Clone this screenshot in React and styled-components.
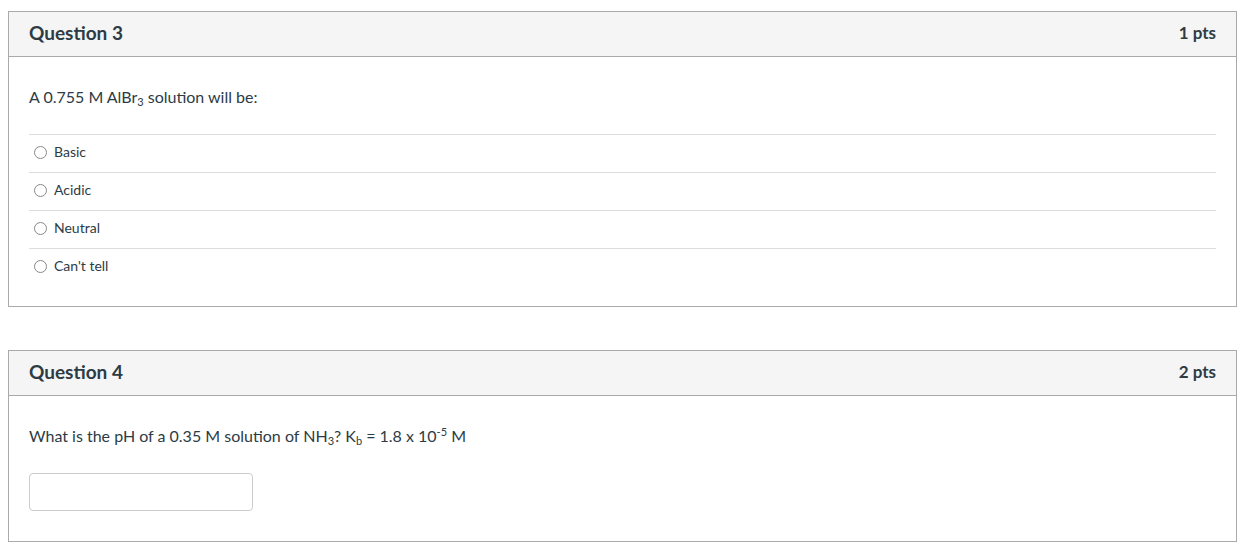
import styled, { createGlobalStyle } from "styled-components";

const GlobalStyle = createGlobalStyle`
  body {
    margin: 0;
    background: #fff;
    font-family: Lato, "Open Sans", sans-serif;
    color: #2d3b45;
  }
`;

const Page = styled.main`
  width: 1229px;
  padding: 11px 0 0 8px;
  display: flex;
  flex-direction: column;
  gap: 43px;
`;

const Card = styled.section`
  border: 1px solid #aaa;
`;

const Header = styled.header`
  display: flex;
  justify-content: space-between;
  align-items: center;
  height: 44px;
  padding: 0 20px;
  background: #f5f5f5;
  border-bottom: 1px solid #aaa;
`;

const Title = styled.h2`
  margin: 0;
  font-size: 19px;
  font-weight: 700;
  padding-bottom: 4px;
`;

const Points = styled.span`
  font-size: 17px;
  font-weight: 700;
  padding-bottom: 3px;
`;

const Body = styled.div`
  padding: ${(p) => p.$pad};
`;

const Prompt = styled.p`
  margin: 0;
  font-size: 16px;
  line-height: 20px;
  sub, sup {
    font-size: 11px;
    line-height: 0;
  }
  sub {
    vertical-align: -3px;
  }
  sup {
    vertical-align: 6px;
  }
`;

const Answers = styled.ul`
  list-style: none;
  margin: 27px 0 0;
  padding: 0;
`;

const Answer = styled.li`
  display: flex;
  align-items: center;
  gap: 7px;
  box-sizing: border-box;
  height: 38px;
  padding: 0 0 4px 5px;
  border-top: 1px solid #ddd;
  font-size: 14px;
`;

const Radio = styled.span`
  width: 11px;
  height: 11px;
  border: 1px solid #888;
  border-radius: 50%;
  background: #fff;
  margin-top: 1px;
`;

const AnswerInput = styled.input`
  display: block;
  box-sizing: border-box;
  width: 224px;
  height: 38px;
  margin-top: 27px;
  border: 1px solid #ccc;
  border-radius: 4px;
  background: #fff;
`;

export default function App() {
  const options = ["Basic", "Acidic", "Neutral", "Can't tell"];
  return (
    <>
      <GlobalStyle />
      <Page>
        <Card>
          <Header>
            <Title>Question 3</Title>
            <Points>1 pts</Points>
          </Header>
          <Body $pad="30px 20px 20px">
            <Prompt>
              A 0.755 M AlBr<sub>3</sub> solution will be:
            </Prompt>
            <Answers>
              {options.map((o) => (
                <Answer key={o}>
                  <Radio />
                  {o}
                </Answer>
              ))}
            </Answers>
          </Body>
        </Card>
        <Card>
          <Header>
            <Title>Question 4</Title>
            <Points>2 pts</Points>
          </Header>
          <Body $pad="30px 20px 30px">
            <Prompt>
              What is the pH of a 0.35 M solution of NH<sub>3</sub>? K<sub>b</sub> = 1.8 x 10<sup>-5</sup> M
            </Prompt>
            <AnswerInput type="text" />
          </Body>
        </Card>
      </Page>
    </>
  );
}
